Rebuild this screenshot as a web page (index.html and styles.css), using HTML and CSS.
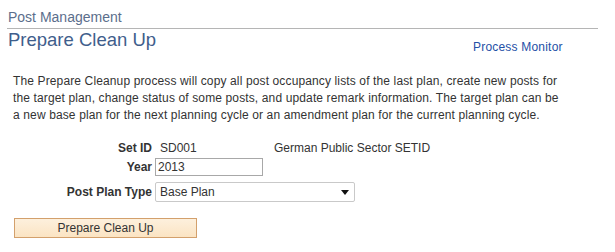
FILE: index.html
```html
<!DOCTYPE html>
<html>
<head>
<meta charset="utf-8">
<link rel="stylesheet" href="styles.css">
</head>
<body>
<div class="hdr">Post Management</div>
<div class="title-row">
  <div class="title">Prepare Clean Up</div>
  <a class="link" href="#">Process Monitor</a>
</div>
<p class="desc">The Prepare Cleanup process will copy all post occupancy lists of the last plan, create new posts for the target plan, change status of some posts, and update remark information. The target plan can be a new base plan for the next planning cycle or an amendment plan for the current planning cycle.</p>
<div class="form">
  <div class="row r1">
    <div class="lbl">Set ID</div>
    <div class="val">SD001</div>
    <div class="descr">German Public Sector SETID</div>
  </div>
  <div class="row r2">
    <div class="lbl">Year</div>
    <div class="input">2013</div>
  </div>
  <div class="row r3">
    <div class="lbl">Post Plan Type</div>
    <div class="select"><span>Base Plan</span><svg class="arrow" width="8" height="5" viewBox="0 0 8 5"><path d="M0 0H8L4 5Z" fill="#111"/></svg></div>
  </div>
</div>
<div class="btn-row"><button class="btn">Prepare Clean Up</button></div>
</body>
</html>
```
FILE: styles.css
```css
html, body {
  margin: 0;
  padding: 0;
  background: #fff;
}
body {
  font-family: "Liberation Sans", Arial, sans-serif;
  font-size: 12px;
  color: #333;
  width: 615px;
  height: 252px;
  overflow: hidden;
}
.hdr {
  margin-left: 7px;
  width: 590px;
  padding: 9px 0 3px 1px;
  font-size: 14px;
  line-height: 16px;
  color: #5b6e8c;
  border-bottom: 1px solid #b5b5b5;
}
.title-row {
  display: flex;
  align-items: flex-start;
  padding-left: 8px;
}
.title {
  flex: 0 0 465px;
  font-size: 18.5px;
  line-height: 22px;
  color: #3f5e8c;
}
.link {
  margin-top: 11px;
  font-size: 12px;
  line-height: 14px;
  letter-spacing: 0.2px;
  color: #2450a6;
  text-decoration: none;
}
.desc {
  margin: 19px 0 0 13px;
  width: 548px;
  line-height: 17px;
  letter-spacing: 0.13px;
  color: #333;
}
.form {
  margin-top: 16px;
}
.row {
  display: grid;
  grid-template-columns: 152px auto 1fr;
  align-items: center;
}
.lbl {
  font-weight: bold;
  text-align: right;
  line-height: 16px;
  color: #333;
}
.r1 {
  height: 16px;
  margin-bottom: 2px;
}
.r1 .val {
  padding-left: 8px;
  width: 114px;
  line-height: 16px;
}
.r1 .descr {
  line-height: 16px;
}
.r2 {
  height: 18px;
  margin-bottom: 6px;
}
.input {
  margin-left: 3px;
  box-sizing: border-box;
  width: 108px;
  height: 18px;
  border: 1px solid #a8a8a8;
  padding-left: 2px;
  line-height: 16px;
}
.r3 {
  height: 20px;
}
.select {
  margin-left: 3px;
  box-sizing: border-box;
  width: 200px;
  height: 20px;
  border: 1px solid #c9c9c9;
  border-radius: 2px;
  display: flex;
  align-items: center;
  justify-content: space-between;
  padding: 0 5px 0 4px;
  line-height: 18px;
}
.arrow {
  display: block;
}
.btn-row {
  margin-top: 16px;
  padding-left: 14px;
}
.btn {
  box-sizing: border-box;
  width: 183px;
  height: 20px;
  border: 1px solid #d3a06c;
  background: linear-gradient(#fdf0dd, #fbe4c3);
  font-family: "Liberation Sans", Arial, sans-serif;
  font-size: 12px;
  color: #333;
  padding: 0;
  line-height: 18px;
}
```
